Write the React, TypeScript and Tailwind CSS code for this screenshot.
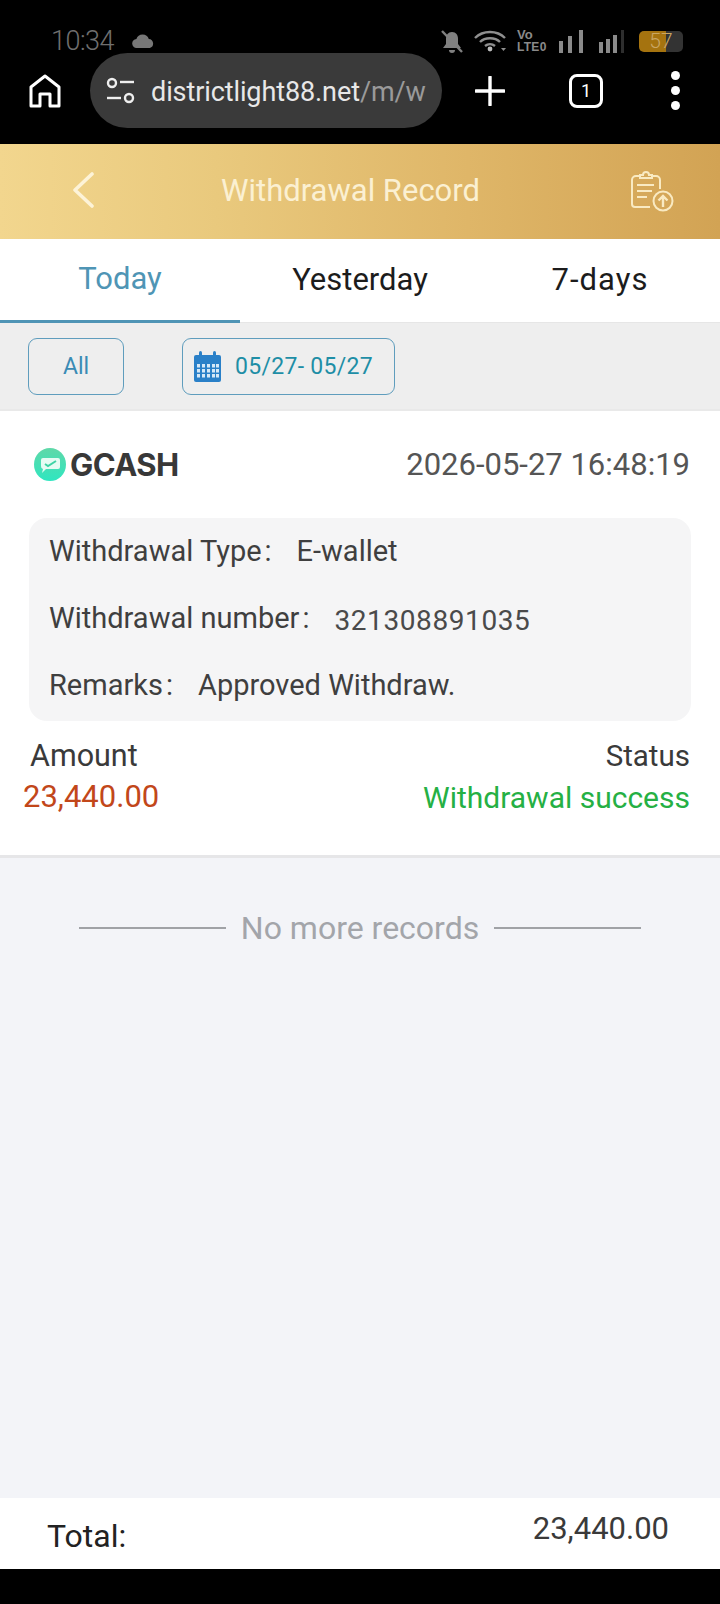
import React from "react";

const BarsA = () => (
  <svg width="26" height="23" viewBox="0 0 26 23" fill="#8a8a8a">
    <rect x="0" y="11" width="4" height="12" />
    <rect x="9" y="6" width="4" height="17" />
    <rect x="20" y="0" width="4" height="23" />
  </svg>
);

const BarsB = () => (
  <svg width="26" height="23" viewBox="0 0 26 23" fill="#8a8a8a">
    <rect x="0" y="12" width="4" height="11" />
    <rect x="7" y="9" width="4" height="14" />
    <rect x="14" y="5" width="4" height="18" />
    <rect x="22" y="0" width="3" height="23" fill="#2e2e2e" />
  </svg>
);

const StatusBar = () => (
  <div className="h-[53px] flex items-end justify-between pl-[51px] pr-[37px] text-[#777]">
    <div className="flex items-center h-[26px] mb-[-1px]">
      <span className="text-[27px] font-light leading-none tracking-[-0.5px] text-[#6f6f6f]">10:34</span>
      <svg className="ml-[18px]" width="23" height="14" viewBox="0 0 23 14" fill="#777">
        <path d="M5 14a4.5 4.5 0 0 1-.6-9 6.5 6.5 0 0 1 12.4 0 4.6 4.6 0 0 1 1 9z" />
      </svg>
    </div>
    <div className="flex items-center h-[24px]">
      <svg width="24" height="23" viewBox="0 0 24 23" fill="#808080" stroke="#808080">
        <path d="M12 2c-4 0-6 3-6 7v5l-3 4h18l-3-4V9c0-4-2-7-6-7z" strokeWidth="0" />
        <path d="M9 20a3 3 0 0 0 6 0z" strokeWidth="0" />
        <path d="M2 1l20 21" strokeWidth="2.4" />
      </svg>
      <svg className="ml-[10px]" width="33" height="22" viewBox="0 0 33 22" fill="none" stroke="#8f8f8f" strokeWidth="2.4">
        <path d="M1 8c8-8 22-8 30 0" />
        <path d="M6 12c5-5 15-5 20 0" />
        <path d="M11 16c3-2.500 7-2.500 10 0" />
        <circle cx="16" cy="19" r="2.400" fill="#bbb" stroke="none" />
        <path d="M27 18h5l-2.500 3z" fill="#8f8f8f" stroke="none" />
      </svg>
      <div className="ml-[10px] flex flex-col font-['Liberation_Sans',sans-serif] font-bold text-[#8a8a8a] w-[31px]">
        <span className="text-[13px] leading-[13px]">Vo</span>
        <span className="text-[12px] leading-[13px] tracking-[0.3px]">LTE0</span>
      </div>
      <div className="ml-[11px] flex"><BarsA /></div>
      <div className="ml-[14px] flex"><BarsB /></div>
      <div className="ml-[14px] w-[44px] h-[21px] rounded-[5px] bg-[linear-gradient(to_right,#a5730f_61%,#333333_61%)] flex items-center justify-center text-[21px] font-light leading-none text-[#c9a664]">
        57
      </div>
    </div>
  </div>
);

const Toolbar = () => (
  <div className="h-[75px] flex items-center text-white">
    <div className="w-[90px] flex justify-center">
      <svg width="32" height="34" viewBox="0 0 32 34" fill="none" stroke="#fff" strokeWidth="3">
        <path d="M2 32V13L16 2l14 11v19h-9V20H11v12z" strokeLinejoin="round" />
      </svg>
    </div>
    <div className="w-[352px] h-[75px] rounded-full bg-[#3a3a3a] flex items-center pl-[16px] shrink-0">
      <svg width="29" height="27" viewBox="0 0 29 27" fill="none" stroke="#eee" strokeWidth="2.400">
        <circle cx="6" cy="6" r="4" />
        <path d="M14 5h14" />
        <path d="M1 21h14" />
        <circle cx="23" cy="21" r="4" />
      </svg>
      <span className="ml-[16px] pt-[3px] text-[27px] tracking-[-0.1px] leading-none whitespace-nowrap text-[#e8e8e8]">
        districtlight88.net<span className="text-[#9a9a9a]">/m/w</span>
      </span>
    </div>
    <svg className="ml-[33px]" width="30" height="30" viewBox="0 0 30 30" stroke="#fff" strokeWidth="3.400" strokeLinecap="round">
      <path d="M15 1v28M1 15h28" />
    </svg>
    <div className="ml-[64px] w-[34px] h-[34px] border-[3px] border-white rounded-[8px] flex items-center justify-center text-[18px] leading-none">
      1
    </div>
    <div className="ml-[68px] flex flex-col gap-[6px]">
      <div className="w-[9px] h-[9px] rounded-full bg-white" />
      <div className="w-[9px] h-[9px] rounded-full bg-white" />
      <div className="w-[9px] h-[9px] rounded-full bg-white" />
    </div>
  </div>
);

const Header = () => (
  <div className="h-[95px] bg-[linear-gradient(to_right,#f2d68e_0%,#e9c97d_30%,#dfb668_65%,#d2a354_100%)] flex items-center justify-between pl-[71px] pr-[46px] text-[#fbf0d2]">
    <svg className="mb-[3px]" width="24" height="36" viewBox="0 0 24 36" fill="none" stroke="#fdf3d8" strokeWidth="3.600" strokeLinecap="round" strokeLinejoin="round">
      <path d="M21 2L4 18l17 16" />
    </svg>
    <span className="text-[31px] leading-none ml-[-24px] mb-[2px]">Withdrawal Record</span>
    <svg className="mb-[1px]" width="44" height="42" viewBox="0 0 44 42" fill="none" stroke="#f9eac2" strokeWidth="2">
      <path d="M9 6H6a4 4 0 0 0-4 4v24a3 3 0 0 0 3 3h15" />
      <path d="M23 6h3a4 4 0 0 1 4 4v9" />
      <path d="M10 8V5h3a3 3 0 0 1 6 0h3v3z" />
      <path d="M7 15h17M7 21h15M7 27h10" />
      <circle cx="33" cy="31" r="9.500" />
      <path d="M33 37V26M28.500 30.500L33 26l4.500 4.500" strokeWidth="2.400" />
    </svg>
  </div>
);

const Tabs = () => (
  <div className="h-[84px] bg-white grid grid-cols-3 text-[31px] leading-none text-[#1c1c1c]">
    <div className="flex items-center justify-center border-b-[3px] border-[#4f94b5] text-[#4f95b5] pb-[2px]">Today</div>
    <div className="flex items-center justify-center pb-[2px] border-b border-[#e6e6e6]">Yesterday</div>
    <div className="flex items-center justify-center pb-[2px] border-b border-[#e6e6e6] tracking-[1px]">7-days</div>
  </div>
);

const Filters = () => (
  <div className="h-[88px] bg-[#eeeeee] flex items-center pl-[28px] border-b-[2px] border-[#e9e9e9]">
    <div className="w-[96px] h-[57px] border border-[#5f9dbd] rounded-[9px] flex items-center justify-center text-[23px] text-[#3a8bb5] leading-none">
      All
    </div>
    <div className="ml-[58px] w-[213px] h-[57px] border border-[#5f9dbd] rounded-[9px] flex items-center pl-[11px] text-[23px] text-[#1e8ea6] leading-none">
      <svg width="27" height="31" viewBox="0 0 27 31">
        <path d="M2 4h23a2 2 0 0 1 2 2v5H0V6a2 2 0 0 1 2-2z" fill="#2a80c8" />
        <rect x="5" y="0" width="3" height="7" rx="1.500" fill="#2a80c8" />
        <rect x="19" y="0" width="3" height="7" rx="1.500" fill="#2a80c8" />
        <path d="M0 11h27v18a2 2 0 0 1-2 2H2a2 2 0 0 1-2-2z" fill="#2a80c8" />
        <g fill="#d5e8f7">
          {[13, 18, 23].map((y) =>
            [3, 8, 13, 18, 22].map((x) => <rect key={`${x}-${y}`} x={x} y={y} width="3" height="3.500" />)
          )}
        </g>
      </svg>
      <span className="ml-[14px] tracking-[0.3px] whitespace-nowrap">05/27- 05/27</span>
    </div>
  </div>
);

const Row = ({ label, value, number }: { label: string; value: string; number?: boolean }) => (
  <div className="flex items-center h-[67px] text-[29px] leading-none text-[#3f3f3f]">
    <span className="whitespace-nowrap">{label}</span>
    <span className="ml-[3px]">:</span>
    <span className={`ml-[25px] whitespace-nowrap ${number ? "text-[#4a4a4a] pt-[4px] text-[28px] tracking-[0.6px]" : ""}`}>{value}</span>
  </div>
);

const Card = () => (
  <div className="h-[447px] bg-white border-b-[3px] border-[#e6e6e8] flex flex-col text-[#3c3c3c]">
    <div className="h-[107px] flex items-center justify-between pl-[34px] pr-[30px] shrink-0">
      <div className="flex items-center">
        <svg width="32" height="33" viewBox="0 0 32 33">
          <defs>
            <linearGradient id="g" x1="0" y1="0" x2="0" y2="1">
              <stop offset="0" stopColor="#5fd8a8" />
              <stop offset="1" stopColor="#2fe6c0" />
            </linearGradient>
          </defs>
          <ellipse cx="16" cy="16.500" rx="16" ry="16.500" fill="url(#g)" />
          <path d="M9 10h15a2 2 0 0 1 2 2v7a2 2 0 0 1-2 2H12l-4 4 1-4a3 3 0 0 1-2-3v-6a2 2 0 0 1 2-2z" fill="#e6fbf3" />
          <path d="M11 16l3 2 8-5" fill="none" stroke="#3fd3a5" strokeWidth="2" />
        </svg>
        <span className="ml-[4px] text-[31px] font-bold leading-none text-[#383838] font-['Inter',sans-serif] tracking-[-0.6px]">GCASH</span>
      </div>
      <span className="text-[31px] leading-none text-[#555555]">2026-05-27 16:48:19</span>
    </div>
    <div className="mx-[29px] h-[203px] rounded-[18px] bg-[#f5f5f6] pl-[20px] flex flex-col shrink-0">
      <Row label="Withdrawal Type" value="E-wallet" />
      <Row label="Withdrawal number" value="321308891035" number />
      <Row label="Remarks" value="Approved Withdraw." />
    </div>
    <div className="flex justify-between pr-[30px] pt-[18px]">
      <div className="flex flex-col">
        <span className="ml-[30px] text-[30.5px] leading-[34px] text-[#3a3a3a]">Amount</span>
        <span className="ml-[23px] mt-[7px] text-[31px] leading-[34px] text-[#c2471a]">23,440.00</span>
      </div>
      <div className="flex flex-col items-end">
        <span className="text-[29.5px] leading-[34px] text-[#3a3a3a]">Status</span>
        <span className="mt-[8px] text-[30px] leading-[34px] text-[#25b044]">Withdrawal success</span>
      </div>
    </div>
  </div>
);

const Empty = () => (
  <div className="flex-1 bg-[#f3f4f8] flex items-start justify-center pt-[52px]">
    <div className="flex items-center">
      <div className="w-[147px] h-[2px] bg-[#a0a2a6]" />
      <span className="mx-[15px] text-[32px] leading-[36px] text-[#a3a5aa]">No more records</span>
      <div className="w-[147px] h-[2px] bg-[#a0a2a6]" />
    </div>
  </div>
);

const Footer = () => (
  <div className="h-[71px] bg-white flex justify-between pl-[47px] pr-[51px] text-[#222]">
    <span className="text-[32px] leading-none mt-[22px]">Total:</span>
    <span className="text-[31px] leading-none mt-[15px] text-[#3a3a3a]">23,440.00</span>
  </div>
);

export default function App() {
  return (
    <div className="w-[720px] h-[1604px] bg-black flex flex-col overflow-hidden font-['Roboto',sans-serif]">
      <div className="h-[144px] shrink-0">
        <StatusBar />
        <Toolbar />
      </div>
      <Header />
      <Tabs />
      <Filters />
      <Card />
      <Empty />
      <Footer />
      <div className="h-[35px] shrink-0 bg-black" />
    </div>
  );
}
